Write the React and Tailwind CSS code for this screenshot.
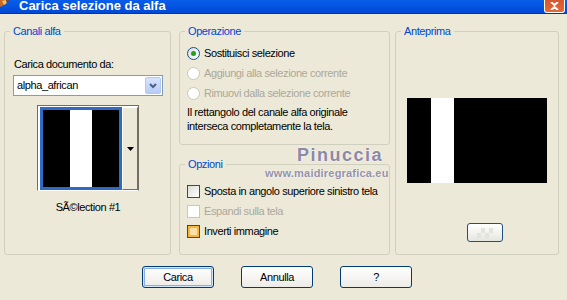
import React from 'react';

function Radio({ checked, disabled, label }) {
  return (
    <div className="flex items-center h-[20px]">
      <span
        className={`w-[13px] h-[13px] rounded-full border flex items-center justify-center ${
          disabled ? 'border-[#CAC8BB] bg-white' : 'border-[#1C5180] bg-linear-to-br from-[#DCDCD7] to-white'
        }`}
      >
        {checked && <span className="w-[5px] h-[5px] rounded-full bg-[#21A121]" />}
      </span>
      <span className={`ml-[4px] whitespace-nowrap ${disabled ? 'text-[#ACA899]' : 'text-black'}`}>{label}</span>
    </div>
  );
}

function Check({ disabled, hover, label }) {
  return (
    <div className="flex items-center h-[20px]">
      <span
        className={`w-[13px] h-[13px] border ${
          disabled
            ? 'border-[#CAC8BB] bg-white'
            : hover
            ? 'border-[#1C5180] bg-[#F9E0A8] shadow-[inset_0_0_0_2px_#F8B636]'
            : 'border-[#1C5180] bg-linear-to-br from-[#DCDCD7] to-white'
        }`}
      />
      <span className={`ml-[4px] whitespace-nowrap ${disabled ? 'text-[#ACA899]' : 'text-black'}`}>{label}</span>
    </div>
  );
}

function Button({ children, isDefault }) {
  return (
    <button
      className={`w-[72px] h-[22px] rounded-[3px] border border-[#003C74] bg-linear-to-b from-white to-[#ECEBE6] text-black text-[11px] ${
        isDefault ? 'shadow-[inset_0_0_0_1px_#CEE7FF,inset_0_0_0_2px_#89ADE4]' : ''
      }`}
    >
      {children}
    </button>
  );
}

function Group({ title, className, children }) {
  return (
    <fieldset className={`border border-[#D0D0BF] rounded-[3px] ${className}`}>
      <legend className="ml-[5px] px-[3px] h-[13px] leading-[13px] text-[#0046D5]">{title}</legend>
      {children}
    </fieldset>
  );
}

export default function App() {
  return (
    <div className="relative w-[567px] h-[300px] overflow-hidden bg-[#ECE9D8] text-[11px] leading-[13px] tracking-[-0.4px] text-black font-['Liberation_Sans',Arial,sans-serif]">
      {/* Title bar */}
      <div className="flex items-start h-[14px] bg-linear-to-b from-[#0A5DEA] to-[#0048D6] border-b border-[#0831A8]">
        <svg width="10" height="9" viewBox="0 0 10 9" className="shrink-0">
          <path d="M0 0h6l-2 5-4 2z" fill="#C9682B" />
          <path d="M2 1l4-1 1 3-3 2z" fill="#F2C45A" />
          <path d="M6 0h3L7 4z" fill="#7A4A2A" />
        </svg>
        <span className="ml-[9px] -mt-[1px] text-[13px] leading-[13px] tracking-normal font-bold text-white">
          Carica selezione da alfa
        </span>
        <div className="ml-auto mr-[2px] w-[21px] h-[13px] rounded-b-[3px] border border-t-0 border-white bg-linear-to-b from-[#D8552E] to-[#E46A3A] flex items-center justify-center">
          <svg width="9" height="8" viewBox="0 0 9 8">
            <path d="M1 0l3.5 3L8 0M1 8l3.5-3L8 8" stroke="white" strokeWidth="2" fill="none" />
          </svg>
        </div>
      </div>

      {/* Groups */}
      <div className="flex pl-[4px] pt-[11px]">
        <Group title="Canali alfa" className="w-[167px] h-[230px]">
          <div className="pl-[9px] pt-[20px]">
            <div>Carica documento da:</div>
            <div className="mt-[4px] -ml-[1px] w-[150px] h-[21px] border border-[#7F9DB9] bg-white flex items-center p-[1px]">
              <span className="flex-1 pl-[2px]">alpha_african</span>
              <span className="w-[16px] h-[17px] rounded-[2px] border border-[#B4C8F6] bg-linear-to-b from-[#D8E4FD] to-[#B6CBF7] flex items-center justify-center">
                <svg width="8" height="6" viewBox="0 0 8 6">
                  <path d="M1 1l3 3 3-3" stroke="#4D6185" strokeWidth="2" fill="none" />
                </svg>
              </span>
            </div>
          </div>
          <div className="ml-[32px] mt-[9px] w-[102px] h-[86px] border border-[#716F64] border-b-white bg-white pl-[2px] pt-[1px] flex">
            <div className="w-[82px] h-[83px] border-[3px] border-[#316AC5] flex">
              <div className="w-[27px] bg-black" />
              <div className="w-[22px] bg-white" />
              <div className="flex-1 bg-black" />
            </div>
            <div className="w-[16px] h-[83px] bg-[#ECE9D8] border-l border-t border-white border-r border-b border-r-[#716F64] border-b-[#716F64] flex items-center justify-center">
              <svg width="7" height="4" viewBox="0 0 7 4">
                <path d="M0 0h7L3.5 4z" fill="black" />
              </svg>
            </div>
          </div>
          <div className="ml-[32px] mt-[10px] w-[102px] text-center">SÃ©lection #1</div>
        </Group>

        <div className="ml-[8px] w-[211px] flex flex-col">
          <Group title="Operazione" className="h-[120px]">
            <div className="pl-[7px] pt-[5px]">
              <Radio checked label="Sostituisci selezione" />
              <Radio disabled label="Aggiungi alla selezione corrente" />
              <Radio disabled label="Rimuovi dalla selezione corrente" />
              <div className="mt-[2px] leading-[14px]">
                Il rettangolo del canale alfa originale
                <br />
                interseca completamente la tela.
              </div>
            </div>
          </Group>
          <Group title="Opzioni" className="mt-[13px] h-[97px]">
            <div className="pl-[7px] pt-[10px]">
              <Check label="Sposta in angolo superiore sinistro tela" />
              <Check disabled label="Espandi sulla tela" />
              <Check hover label="Inverti immagine" />
            </div>
          </Group>
        </div>

        <Group title="Anteprima" className="ml-[5px] w-[164px] h-[230px]">
          <div className="pt-[60px]">
            <div className="mx-auto w-[140px] h-[85px] flex">
              <div className="w-[24px] bg-black" />
              <div className="w-[23px] bg-white" />
              <div className="flex-1 bg-black" />
            </div>
            <div className="mt-[40px] ml-[71px] w-[36px] h-[19px] rounded-[3px] border border-[#1C5180] bg-linear-to-b from-white to-[#E6E6E0] flex items-center justify-center">
              <svg width="16" height="10" viewBox="0 0 16 10">
                <path d="M4 0h4v5H4zM8 5h4v5H8zM0 5h4v5H0zM12 0h4v5h-4z" fill="#E4E4DE" />
              </svg>
            </div>
          </div>
        </Group>
      </div>

      {/* Buttons */}
      <div className="flex pl-[142px] pt-[11px] gap-[27px]">
        <Button isDefault>Carica</Button>
        <Button>Annulla</Button>
        <Button>?</Button>
      </div>

      {/* Watermark over the dialog */}
      <div className="absolute left-[297px] top-[145px] text-[18px] leading-[20px] tracking-[1.5px] font-bold text-[#8C89A8] [text-shadow:0_0_2px_#fff]">
        Pinuccia
      </div>
      <div className="absolute left-[265px] top-[167px] text-[11px] leading-[13px] tracking-[0.2px] font-bold text-[#9592AC] [text-shadow:0_0_2px_#fff]">
        www.maidiregrafica.eu
      </div>
    </div>
  );
}
